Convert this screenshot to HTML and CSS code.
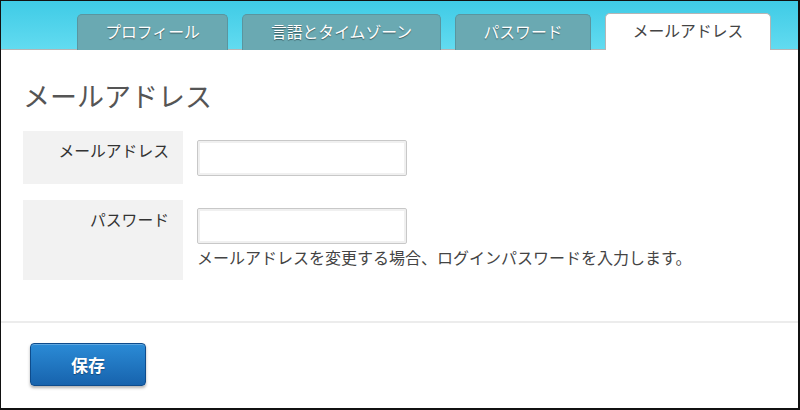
FILE: index.html
```html
<!DOCTYPE html>
<html lang="ja">
<head>
<meta charset="utf-8">
<title>メールアドレス</title>
<link rel="stylesheet" href="styles.css">
</head>
<body>
<div class="frame">
  <div class="header">
    <div class="tab">プロフィール</div>
    <div class="tab tab-wide">言語とタイムゾーン</div>
    <div class="tab tab-narrow">パスワード</div>
    <div class="tab tab-active">メールアドレス</div>
  </div>
  <div class="main">
    <h1 class="title">メールアドレス</h1>
    <div class="row">
      <div class="label">メールアドレス</div>
      <div class="field"><input class="input" type="text"></div>
    </div>
    <div class="row">
      <div class="label">パスワード</div>
      <div class="field">
        <input class="input" type="password">
        <div class="help">メールアドレスを変更する場合、ログインパスワードを入力します。</div>
      </div>
    </div>
  </div>
  <div class="footer">
    <button class="btn" type="button">保存</button>
  </div>
</div>
</body>
</html>
```

FILE: styles.css
```css
* { box-sizing: border-box; }
html, body { margin: 0; padding: 0; background: #fff; }
body {
  font-family: "Noto Sans CJK JP", "Noto Sans", sans-serif;
  color: #333;
}
.frame {
  width: 800px;
  height: 410px;
  border: 1px solid #111;
  border-right-width: 2px;
  border-bottom-width: 2px;
  display: flex;
  flex-direction: column;
  overflow: hidden;
}
.header {
  background: linear-gradient(#3fcbe6, #62dbf0);
  display: flex;
  align-items: flex-end;
  gap: 14px;
  padding: 12px 0 0 76px;
  border-bottom: 1px solid #b5b5b5;
}
.tab {
  width: 151px;
  height: 36px;
  margin-bottom: -1px;
  background: #6aa9b2;
  border: 1px solid #5a959f;
  border-bottom: none;
  border-radius: 5px 5px 0 0;
  color: #fff;
  font-size: 15.8px;
  line-height: 34px;
  text-align: center;
  text-shadow: 0 1px 1px rgba(0,0,0,0.45);
}
.tab-wide { width: 199px; }
.tab-narrow { width: 136px; }
.tab-active {
  width: 166px;
  height: 37px;
  background: #fff;
  border-color: #b5b5b5;
  color: #444;
  text-shadow: none;
}
.main {
  padding: 28px 22px 41px;
}
.title {
  margin: 0 0 17px;
  font-size: 27px;
  line-height: 36px;
  font-weight: normal;
  color: #555;
}
.row {
  display: flex;
  gap: 14px;
  margin-bottom: 16px;
}
.row:last-child { margin-bottom: 0; }
.label {
  width: 160px;
  min-height: 53px;
  background: #f2f2f2;
  text-align: right;
  padding: 9px 14px 0 0;
  font-size: 15.8px;
  line-height: 22px;
  color: #333;
}
.field {
  padding: 9px 0 8px;
  display: flex;
  flex-direction: column;
}
.row:last-child .field { padding-top: 8px; }
.input {
  width: 210px;
  height: 36px;
  border: 1px solid #c8c8c8;
  border-radius: 2px;
  box-shadow: inset 0 0 0 2px #f0f0f0;
  background: #fff;
  margin: 0;
  font-size: 15px;
}
.help {
  margin: 2px 0 4px;
  font-size: 16px;
  line-height: 22px;
  color: #444;
}
.footer {
  border-top: 2px solid #ececec;
  padding: 20px 0 0 29px;
}
.btn {
  width: 116px;
  height: 43px;
  border: 1px solid #0e4c8c;
  border-radius: 4px;
  background: linear-gradient(#2b8bd6, #1763ad);
  box-shadow: 0 2px 3px rgba(0,0,0,0.3), inset 0 1px 0 rgba(255,255,255,0.25);
  color: #fff;
  font-family: "Noto Sans CJK JP", sans-serif;
  font-size: 17px;
  font-weight: bold;
  text-shadow: 0 1px 1px rgba(0,0,0,0.35);
  padding: 0;
  cursor: pointer;
}
```
